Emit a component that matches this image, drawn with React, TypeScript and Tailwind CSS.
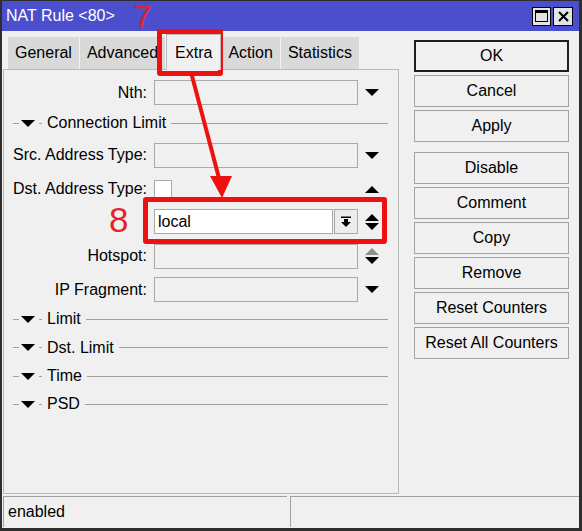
import React from 'react'

const FONT = { fontFamily: '"Liberation Sans", Arial, sans-serif' }

const Down = ({ className = 'text-black' }: { className?: string }) => (
  <svg width="14" height="7" viewBox="0 0 14 7" className={className}>
    <path d="M0 0H14L7 7Z" fill="currentColor" />
  </svg>
)

const Up = ({ className = 'text-black' }: { className?: string }) => (
  <svg width="14" height="7" viewBox="0 0 14 7" className={className}>
    <path d="M0 7H14L7 0Z" fill="currentColor" />
  </svg>
)

type RowProps = {
  label: string
  h: string
  children?: React.ReactNode
  arrows?: React.ReactNode
}

function FieldRow({ label, h, children, arrows }: RowProps) {
  return (
    <div className={`flex items-center ${h}`}>
      <div className="w-[143px] text-right whitespace-nowrap">{label}</div>
      <div className="ml-[7px] w-[204px] flex items-center">{children}</div>
      <div className="ml-[7px] w-[14px] flex flex-col items-center gap-[2px]">{arrows}</div>
    </div>
  )
}

const EmptyInput = () => <div className="h-[25px] w-[204px] border border-[#a9a9a9] bg-[#f0f0f0]" />

function Section({ title, h }: { title: string; h: string }) {
  return (
    <div className={`flex items-center pl-[9px] pr-[10px] ${h}`}>
      <div className="w-[6px] h-px bg-[#a0a0a0]" />
      <Down className="ml-[2px] text-black" />
      <div className="ml-[4px] w-[3px] h-px bg-[#a0a0a0]" />
      <span className="ml-[5px]">{title}</span>
      <div className="ml-[5px] flex-1 h-px bg-[#a0a0a0]" />
    </div>
  )
}

const tabs = ['General', 'Advanced', 'Extra', 'Action', 'Statistics']

const buttons = [
  ['OK', 'Cancel', 'Apply'],
  ['Disable', 'Comment', 'Copy', 'Remove', 'Reset Counters', 'Reset All Counters'],
]

export default function App() {
  return (
    <div className="relative w-[582px] h-[531px] overflow-hidden text-[16px] text-black" style={FONT}>
      <div className="w-full h-full flex flex-col bg-[#f0f0f0] border-t border-l-2 border-r-[3px] border-b-[3px] border-[#2e2e2e]">
        {/* title bar */}
        <div className="h-[30px] shrink-0 bg-[#4b4fcd] flex items-center pl-[4px] pr-[6px]">
          <span className="text-white">NAT Rule &lt;80&gt;</span>
          <div className="ml-auto flex gap-[2px]">
            <div className="w-[19px] h-[19px] border border-black bg-[#e4e4e4] flex items-center justify-center">
              <div className="w-[13px] h-[12px] border border-black border-t-[3px]" />
            </div>
            <div className="w-[20px] h-[19px] border border-black bg-[#e4e4e4] flex items-center justify-center">
              <svg width="11" height="11" viewBox="0 0 11 11">
                <path d="M1 1L10 10M10 1L1 10" stroke="black" strokeWidth="2" />
              </svg>
            </div>
          </div>
        </div>

        {/* body */}
        <div className="flex flex-1 min-h-0">
          <div className="w-[396px] ml-[1px] flex flex-col pt-[6px]">
            <div className="flex h-[32px] pl-[5px] items-end">
              {tabs.map((t) =>
                t === 'Extra' ? (
                  <div key={t} className="relative z-10 h-[36px] -mb-px px-[8px] flex items-center bg-[#f0f0f0] border border-b-0 border-[#b9b9b9]">
                    {t}
                  </div>
                ) : (
                  <div key={t} className="h-[32px] px-[7px] flex items-center bg-[#d9d9d9] border-r border-[#f4f4f4]">
                    {t}
                  </div>
                ),
              )}
            </div>
            <div className="flex-1 border border-[#b9b9b9] pt-[6px]">
              <FieldRow label="Nth:" h="h-[33px]" arrows={<Down />}>
                <EmptyInput />
              </FieldRow>
              <Section title="Connection Limit" h="h-[28px]" />
              <FieldRow label="Src. Address Type:" h="h-[36px]" arrows={<Down />}>
                <EmptyInput />
              </FieldRow>
              <FieldRow label="Dst. Address Type:" h="h-[32px]" arrows={<Up />}>
                <div className="w-[18px] h-[18px] border border-[#a9a9a9] bg-white" />
              </FieldRow>
              <FieldRow
                label=""
                h="h-[33px]"
                arrows={
                  <>
                    <Up />
                    <Down />
                  </>
                }
              >
                <div className="h-[25px] w-[179px] border border-[#a9a9a9] bg-white flex items-center pl-[3px]">local</div>
                <div className="ml-[1px] h-[25px] w-[24px] border border-[#a9a9a9] bg-[#ececec] flex items-center justify-center">
                  <svg width="12" height="12" viewBox="0 0 12 12">
                    <rect x="1" y="0.5" width="10" height="1.5" fill="black" />
                    <rect x="4" y="3" width="4" height="3" fill="black" />
                    <path d="M1 6H11L6 11Z" fill="black" />
                  </svg>
                </div>
              </FieldRow>
              <FieldRow
                label="Hotspot:"
                h="h-[36px]"
                arrows={
                  <>
                    <Up className="text-[#8c918c]" />
                    <Down />
                  </>
                }
              >
                <EmptyInput />
              </FieldRow>
              <FieldRow label="IP Fragment:" h="h-[31px]" arrows={<Down />}>
                <EmptyInput />
              </FieldRow>
              <Section title="Limit" h="h-[28px]" />
              <Section title="Dst. Limit" h="h-[29px]" />
              <Section title="Time" h="h-[28px]" />
              <Section title="PSD" h="h-[28px]" />
            </div>
          </div>

          <div className="ml-[15px] w-[155px] pt-[9px] flex flex-col gap-[10px]">
            {buttons.map((group, gi) => (
              <div key={gi} className="flex flex-col gap-[3px]">
                {group.map((b) => (
                  <div
                    key={b}
                    className={`h-[32px] flex items-center justify-center bg-[#f0f0f0] ${
                      b === 'OK' ? 'border-2 border-[#1e1e1e]' : 'border border-[#a3a3a3]'
                    }`}
                  >
                    {b}
                  </div>
                ))}
              </div>
            ))}
          </div>
        </div>

        {/* status bar */}
        <div className="h-[34px] shrink-0 flex pt-[2px] pl-[1px] gap-[3px]">
          <div className="w-[284px] h-[31px] border-t border-l border-[#a0a0a0] flex items-center pl-[4px]">enabled</div>
          <div className="flex-1 h-[31px] border-t border-l border-[#a0a0a0]" />
        </div>
      </div>

      {/* red annotations */}
      <span className="absolute left-[134px] top-[-3px] text-[32px] leading-[40px] text-[#e3222a]">7</span>
      <span className="absolute left-[109px] top-[199px] text-[35px] leading-[42px] text-[#e3222a]">8</span>
      <div className="absolute left-[157px] top-[29px] w-[66px] h-[47px] border-[5px] border-[#ee1111] rounded-[3px]" />
      <div className="absolute left-[143px] top-[197px] w-[244px] h-[47px] border-[5px] border-[#ee1111] rounded-[3px]" />
      <svg className="absolute left-0 top-0" width="582" height="531" viewBox="0 0 582 531">
        <path d="M191.5 74L219.5 180" stroke="#ee1111" strokeWidth="4" />
        <path d="M210 176L232 176L222 198Z" fill="#ee1111" />
      </svg>
    </div>
  )
}
